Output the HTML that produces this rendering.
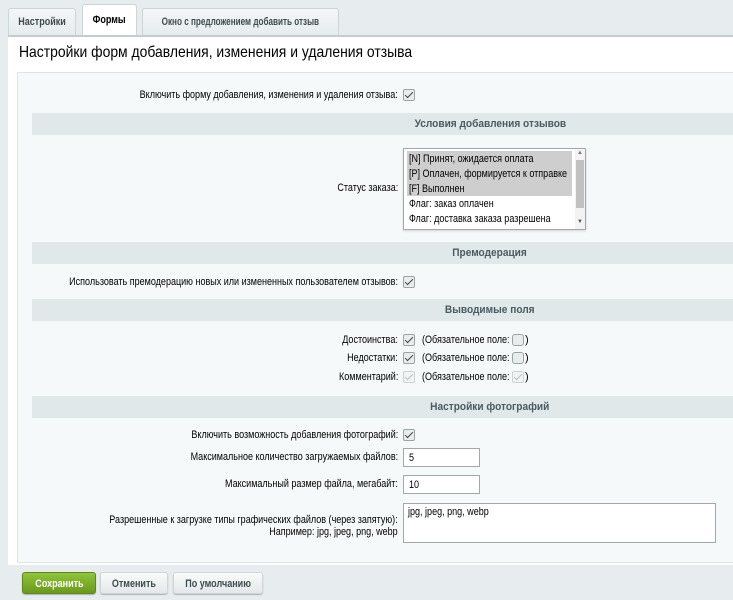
<!DOCTYPE html>
<html><head><meta charset="utf-8"><style>
*{box-sizing:border-box;margin:0;padding:0}
body{width:733px;height:600px;background:#e7ecee;font-family:"Liberation Sans",Arial,sans-serif;font-size:11px;color:#000;position:relative;overflow:hidden}
.a{position:absolute}
.s{display:inline-block;transform:scaleX(0.82);transform-origin:left center;white-space:nowrap}
.sc{display:inline-block;transform:scaleX(0.82);transform-origin:center center;white-space:nowrap}
.tab{position:absolute;top:8px;height:28px;border:1px solid #ccd5d8;border-bottom:none;background:linear-gradient(#f3f6f7,#e6ecee);border-radius:3px 3px 0 0;font-weight:bold;font-size:11px;color:#3f4b4e;line-height:26px;text-align:center;white-space:nowrap}
.hd{position:absolute;left:32px;width:916px;height:22px;background:#e0e8ea;text-align:center;font-weight:bold;color:#4b5b5f;line-height:22px}
.hd span{display:inline-block;transform:scaleX(0.92);white-space:nowrap}
.lb{position:absolute;right:335px;text-align:right;color:#000;white-space:nowrap;transform:scaleX(0.82);transform-origin:right center}
.cb{position:absolute;width:12px;height:12px;border:1px solid #9aa3a6;border-radius:2px;background:#e9eced}
.cb.ch::after{content:"";position:absolute;left:3px;top:0px;width:3px;height:7px;border:solid #444;border-width:0 1.5px 1.5px 0;transform:rotate(45deg)}
.cb.dis{border-color:#cdd2d4;background:#f2f4f4}
.cb.dis::after{border-color:#b8bfc1}
.cb.un{border-radius:3px}
.inp{position:absolute;left:403px;width:77px;height:19px;border:1px solid #a3a9ab;background:#fff;padding:3px 5px;font-size:11px}
.btn{position:absolute;top:572px;height:22px;border-radius:3px;font-weight:bold;font-size:11px;line-height:22px;text-align:center;box-shadow:0 1px 1px rgba(0,0,0,.25)}
</style></head><body>
<div class="tab" style="left:8px;width:68px"><span class="sc">Настройки</span></div>
<div class="tab" style="left:82px;width:55px;top:4px;height:32px;background:#fff;line-height:30px;color:#000"><span class="sc">Формы</span></div>
<div class="tab" style="left:142px;width:197px;color:#3f4b4e;overflow:hidden"><span class="sc" style="transform:scaleX(0.74);margin-left:-40px;margin-right:-40px">Окно с предложением добавить отзыв</span></div>
<div class="a" style="left:8px;top:35px;width:725px;height:2px;background:#c3cdd0"></div>
<div class="a" style="left:8px;top:37px;width:725px;height:528px;background:#fff"></div>
<div class="a" style="left:19px;top:44px;font-size:16px;color:#000;white-space:nowrap;transform:scaleX(0.87);transform-origin:left center">Настройки форм добавления, изменения и удаления отзыва</div>
<div class="a" style="left:17px;top:72px;width:716px;height:491px;background:#f5f9f9;border:1px solid #dce5e8;border-right:none"></div>

<div class="lb" style="top:89px">Включить форму добавления, изменения и удаления отзыва:</div>
<div class="cb ch" style="left:403px;top:89px"></div>

<div class="hd" style="top:113px"><span>Условия добавления отзывов</span></div>
<div class="lb" style="top:182px">Статус заказа:</div>
<div class="a" style="left:403px;top:148px;width:183px;height:82px;border:1px solid #a3a9ab;background:#fff;box-shadow:0 1px 2px rgba(0,0,0,.15);overflow:hidden">
 <div class="a" style="left:3px;top:2px;width:165px;height:45px;background:#cecece"></div>
 <div class="a" style="left:171px;top:0;width:10px;height:80px;background:#f3f3f3"></div>
 <div class="a" style="left:172px;top:11px;width:8px;height:48px;background:#c1c1c1"></div>
 <div class="a" style="left:173px;top:1px;font-size:6px;color:#777">▲</div>
 <div class="a" style="left:173px;top:70px;font-size:6px;color:#555">▼</div>
 <div class="a s" style="left:5px;top:3px;line-height:15px">[N] Принят, ожидается оплата<br>[P] Оплачен, формируется к отправке<br>[F] Выполнен<br>Флаг: заказ оплачен<br>Флаг: доставка заказа разрешена</div>
</div>

<div class="hd" style="top:242px"><span>Премодерация</span></div>
<div class="lb" style="top:276px">Использовать премодерацию новых или измененных пользователем отзывов:</div>
<div class="cb ch" style="left:403px;top:276px"></div>

<div class="hd" style="top:299px"><span>Выводимые поля</span></div>
<div class="lb" style="top:334px">Достоинства:</div><div class="cb ch" style="left:403px;top:334px"></div>
<div class="a s" style="left:422px;top:334px">(Обязательное поле:</div><div class="cb un" style="left:512px;top:334px"></div><div class="a" style="left:525px;top:334px">)</div>
<div class="lb" style="top:352px">Недостатки:</div><div class="cb ch" style="left:403px;top:352px"></div>
<div class="a s" style="left:422px;top:352px">(Обязательное поле:</div><div class="cb un" style="left:512px;top:352px"></div><div class="a" style="left:525px;top:352px">)</div>
<div class="lb" style="top:371px">Комментарий:</div><div class="cb ch dis" style="left:403px;top:371px"></div>
<div class="a s" style="left:422px;top:371px">(Обязательное поле:</div><div class="cb ch dis" style="left:512px;top:371px"></div><div class="a" style="left:525px;top:371px">)</div>

<div class="hd" style="top:396px"><span>Настройки фотографий</span></div>
<div class="lb" style="top:429px">Включить возможность добавления фотографий:</div>
<div class="cb ch" style="left:403px;top:429px"></div>
<div class="lb" style="top:451px">Максимальное количество загружаемых файлов:</div>
<div class="inp" style="top:448px"><span class="s">5</span></div>
<div class="lb" style="top:478px">Максимальный размер файла, мегабайт:</div>
<div class="inp" style="top:475px"><span class="s">10</span></div>
<div class="lb" style="top:514px;line-height:12px">Разрешенные к загрузке типы графических файлов (через запятую):<br>Например: jpg, jpeg, png, webp</div>
<div class="a" style="left:403px;top:503px;width:313px;height:40px;border:1px solid #a3a9ab;background:#fff;padding:2px 4px"><span class="s">jpg, jpeg, png, webp</span></div>

<div class="btn" style="left:22px;width:74px;background:linear-gradient(#8fc43a,#6a9a1c);color:#fff;border:1px solid #5f8a17"><span class="sc">Сохранить</span></div>
<div class="btn" style="left:100px;width:68px;background:linear-gradient(#fafbfb,#e3e8ea);color:#3f4b4e;border:1px solid #d0d6d8"><span class="sc">Отменить</span></div>
<div class="btn" style="left:173px;width:90px;background:linear-gradient(#fafbfb,#e3e8ea);color:#3f4b4e;border:1px solid #d0d6d8"><span class="sc">По умолчанию</span></div>
</body></html>
